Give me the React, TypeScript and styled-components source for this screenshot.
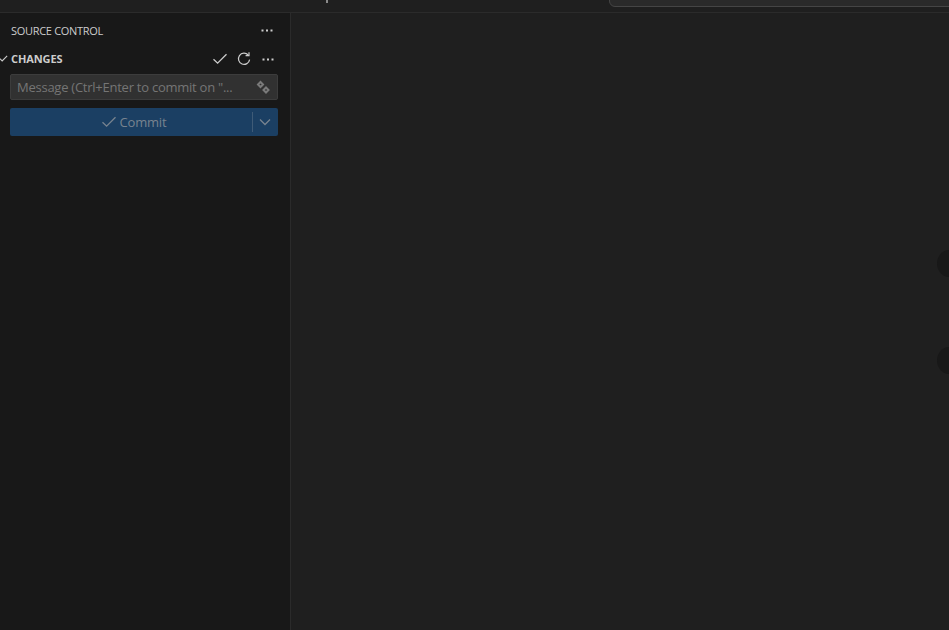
import React from "react"
import styled, { createGlobalStyle } from "styled-components"

const GlobalStyle = createGlobalStyle`
  html, body {
    margin: 0;
    padding: 0;
    background: #1f1f1f;
    overflow: hidden;
  }
  body {
    font-family: "Open Sans", "Noto Sans", sans-serif;
  }
`

const Dots = () => (
  <svg width="16" height="16" viewBox="0 0 16 16" fill="currentColor">
    <rect x="2.5" y="7.5" width="2" height="2" />
    <rect x="7" y="7.5" width="2" height="2" />
    <rect x="11.5" y="7.5" width="2" height="2" />
  </svg>
)

const Check = ({ size = 16, weight = 1.3 }: { size?: number; weight?: number }) => (
  <svg width={size} height={size} viewBox="0 0 16 16" fill="none" stroke="currentColor" strokeWidth={weight}>
    <path d="M1.5 8.2 L5.6 12.2 L14.5 3.2" />
  </svg>
)

const Refresh = () => (
  <svg width="16" height="16" viewBox="0 0 16 16" fill="none" stroke="currentColor" strokeWidth="1.2">
    <path d="M12.2 4 A5.6 5.6 0 1 0 13.6 8.6" />
    <path d="M13 1.2 V4.6 H9.6" />
  </svg>
)

const Sparkle = () => (
  <svg width="16" height="16" viewBox="0 0 16 16" fill="none" stroke="currentColor" strokeWidth="2">
    <path d="M5.5 3 L8 5.5 L5.5 8 L3 5.5 Z" />
    <path d="M11 8.5 L13.5 11 L11 13.5 L8.5 11 Z" />
  </svg>
)

const Chevron = () => (
  <svg width="16" height="16" viewBox="0 0 16 16" fill="none" stroke="currentColor" strokeWidth="1.3">
    <path d="M3 5.5 L8 10.5 L13 5.5" />
  </svg>
)

export default function App() {
  return (
    <>
      <GlobalStyle />
      <Page>
        <TitleBar>
          <TitleTick />
          <SearchBox />
        </TitleBar>
        <Body>
          <Sidebar>
            <PanelHeader>
              <PanelTitle>SOURCE CONTROL</PanelTitle>
              <PanelAction>
                <Dots />
              </PanelAction>
            </PanelHeader>
            <SectionHeader>
              <Twisty>
                <Check size={9} weight={2} />
              </Twisty>
              <SectionTitle>CHANGES</SectionTitle>
              <SectionActions>
                <Check />
                <Refresh />
                <Dots />
              </SectionActions>
            </SectionHeader>
            <Content>
              <MessageBox>
                <MessageText>Message (Ctrl+Enter to commit on "...</MessageText>
                <Sparkle />
              </MessageBox>
              <CommitButton>
                <CommitMain>
                  <Check />
                  <span>Commit</span>
                </CommitMain>
                <CommitDivider />
                <CommitMore>
                  <Chevron />
                </CommitMore>
              </CommitButton>
            </Content>
          </Sidebar>
          <Editor>
            <EdgeBlob $top={237} />
            <EdgeBlob $top={334} />
          </Editor>
        </Body>
      </Page>
    </>
  )
}

const Page = styled.div`
  display: flex;
  flex-direction: column;
  width: 949px;
  height: 630px;
  overflow: hidden;
`

const TitleBar = styled.div`
  position: relative;
  height: 12px;
  flex: none;
  background: #1f1f1f;
  border-bottom: 1px solid #2b2b2b;
`

const TitleTick = styled.div`
  position: absolute;
  left: 326px;
  top: 0;
  width: 2px;
  height: 3px;
  background: #8a8a8a;
`

const SearchBox = styled.div`
  position: absolute;
  left: 609px;
  top: -20px;
  width: 360px;
  height: 25px;
  background: #2a2a2a;
  border: 1px solid #454545;
  border-radius: 6px;
`

const Body = styled.div`
  display: flex;
  flex: 1;
  min-height: 0;
`

const Sidebar = styled.div`
  width: 290px;
  flex: none;
  background: #181818;
  border-right: 1px solid #2b2b2b;
`

const PanelHeader = styled.div`
  display: flex;
  align-items: center;
  justify-content: space-between;
  height: 35px;
  padding: 0 15px 0 11px;
`

const PanelTitle = styled.div`
  font-size: 11px;
  letter-spacing: -0.3px;
  color: #cccccc;
`

const PanelAction = styled.div`
  display: flex;
  color: #cccccc;
  margin-top: -1px;
`

const SectionHeader = styled.div`
  display: flex;
  align-items: center;
  height: 22px;
  margin-top: -1px;
  margin-bottom: 1px;
  color: #cccccc;
`

const Twisty = styled.div`
  display: flex;
  width: 9px;
  flex: none;
  margin-left: -1px;
  margin-right: 3px;
`

const SectionTitle = styled.div`
  font-size: 11px;
  font-weight: 700;
  letter-spacing: -0.1px;
  flex: 1;
`

const SectionActions = styled.div`
  display: flex;
  align-items: center;
  gap: 8px;
  padding: 2px 14px 0 0;
`

const Content = styled.div`
  display: flex;
  flex-direction: column;
  gap: 8px;
  padding: 4px 12px 0 10px;
`

const MessageBox = styled.div`
  display: flex;
  align-items: center;
  justify-content: space-between;
  box-sizing: border-box;
  height: 26px;
  padding: 0 6px 0 6px;
  background: #313131;
  border: 1px solid #3c3c3c;
  border-radius: 2px;
  color: #7a7a7a;
`

const MessageText = styled.div`
  font-size: 13px;
  letter-spacing: -0.25px;
  color: #757575;
  white-space: nowrap;
`

const CommitButton = styled.div`
  display: flex;
  align-items: center;
  height: 28px;
  background: #1b3f63;
  border-radius: 2px;
  color: #78838f;
`

const CommitMain = styled.div`
  flex: 1;
  display: flex;
  align-items: center;
  justify-content: center;
  gap: 3px;
  padding-left: 5px;
  font-size: 13px;
  letter-spacing: -0.2px;
`

const CommitDivider = styled.div`
  width: 1px;
  height: 20px;
  background: #3f5b77;
`

const CommitMore = styled.div`
  display: flex;
  justify-content: center;
  width: 25px;
  padding-right: 2px;
  box-sizing: border-box;
`

const Editor = styled.div`
  position: relative;
  flex: 1;
  background: #1f1f1f;
  overflow: hidden;
`

const EdgeBlob = styled.div<{ $top: number }>`
  position: absolute;
  right: -12px;
  top: ${(props) => props.$top}px;
  width: 24px;
  height: 27px;
  border-radius: 50%;
  background: #181818;
`
